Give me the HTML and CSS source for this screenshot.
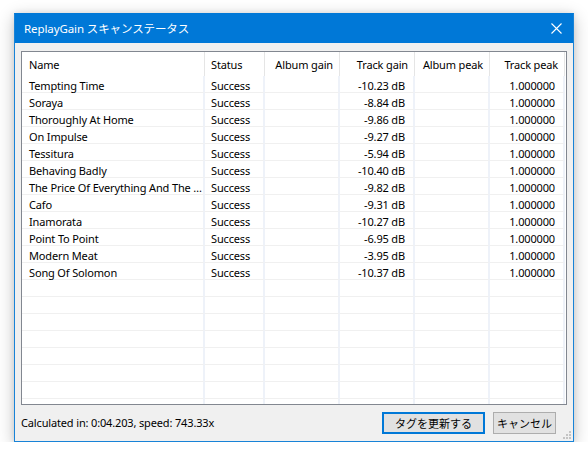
FILE: index.html
```html
<!DOCTYPE html>
<html lang="ja">
<head>
<meta charset="utf-8">
<title>ReplayGain スキャンステータス</title>
<link rel="stylesheet" href="styles.css">
</head>
<body>
<div class="window">
  <div class="titlebar">
    <span class="title">ReplayGain スキャンステータス</span>
    <span class="close">
      <svg width="11" height="11" viewBox="0 0 11 11"><path d="M0.5 0.5 L10.5 10.5 M10.5 0.5 L0.5 10.5" stroke="#fff" stroke-width="1.1" fill="none"/></svg>
    </span>
  </div>
  <div class="content">
    <div class="list">
      <div class="grid">
        <div class="hc">Name</div><div class="hc">Status</div><div class="hc r">Album gain</div><div class="hc r">Track gain</div><div class="hc r">Album peak</div><div class="hc r">Track peak</div>

        <div class="c">Tempting Time</div><div class="c s">Success</div><div class="c"></div><div class="c r">-10.23 dB</div><div class="c"></div><div class="c r">1.000000</div>
        <div class="c">Soraya</div><div class="c s">Success</div><div class="c"></div><div class="c r">-8.84 dB</div><div class="c"></div><div class="c r">1.000000</div>
        <div class="c">Thoroughly At Home</div><div class="c s">Success</div><div class="c"></div><div class="c r">-9.86 dB</div><div class="c"></div><div class="c r">1.000000</div>
        <div class="c">On Impulse</div><div class="c s">Success</div><div class="c"></div><div class="c r">-9.27 dB</div><div class="c"></div><div class="c r">1.000000</div>
        <div class="c">Tessitura</div><div class="c s">Success</div><div class="c"></div><div class="c r">-5.94 dB</div><div class="c"></div><div class="c r">1.000000</div>
        <div class="c">Behaving Badly</div><div class="c s">Success</div><div class="c"></div><div class="c r">-10.40 dB</div><div class="c"></div><div class="c r">1.000000</div>
        <div class="c">The Price Of Everything And The …</div><div class="c s">Success</div><div class="c"></div><div class="c r">-9.82 dB</div><div class="c"></div><div class="c r">1.000000</div>
        <div class="c">Cafo</div><div class="c s">Success</div><div class="c"></div><div class="c r">-9.31 dB</div><div class="c"></div><div class="c r">1.000000</div>
        <div class="c">Inamorata</div><div class="c s">Success</div><div class="c"></div><div class="c r">-10.27 dB</div><div class="c"></div><div class="c r">1.000000</div>
        <div class="c">Point To Point</div><div class="c s">Success</div><div class="c"></div><div class="c r">-6.95 dB</div><div class="c"></div><div class="c r">1.000000</div>
        <div class="c">Modern Meat</div><div class="c s">Success</div><div class="c"></div><div class="c r">-3.95 dB</div><div class="c"></div><div class="c r">1.000000</div>
        <div class="c">Song Of Solomon</div><div class="c s">Success</div><div class="c"></div><div class="c r">-10.37 dB</div><div class="c"></div><div class="c r">1.000000</div>

        <div class="c"></div><div class="c"></div><div class="c"></div><div class="c"></div><div class="c"></div><div class="c"></div>
        <div class="c"></div><div class="c"></div><div class="c"></div><div class="c"></div><div class="c"></div><div class="c"></div>
        <div class="c"></div><div class="c"></div><div class="c"></div><div class="c"></div><div class="c"></div><div class="c"></div>
        <div class="c"></div><div class="c"></div><div class="c"></div><div class="c"></div><div class="c"></div><div class="c"></div>
        <div class="c"></div><div class="c"></div><div class="c"></div><div class="c"></div><div class="c"></div><div class="c"></div>
        <div class="c"></div><div class="c"></div><div class="c"></div><div class="c"></div><div class="c"></div><div class="c"></div>
        <div class="c"></div><div class="c"></div><div class="c"></div><div class="c"></div><div class="c"></div><div class="c"></div>
        <div class="c"></div><div class="c"></div><div class="c"></div><div class="c"></div><div class="c"></div><div class="c"></div>
      </div>
    </div>
    <div class="footer">
      <span class="status">Calculated in: 0:04.203, speed: 743.33x</span>
      <button class="btn default">タグを更新する</button>
      <button class="btn cancel">キャンセル</button>
    </div>
  </div>
  <svg class="grip" width="8" height="8" viewBox="0 0 8 8">
    <rect x="6" y="0" width="2" height="2" fill="#c4c4c4"/>
    <rect x="3" y="3" width="2" height="2" fill="#c4c4c4"/>
    <rect x="6" y="3" width="2" height="2" fill="#c4c4c4"/>
    <rect x="0" y="6" width="2" height="2" fill="#c4c4c4"/>
    <rect x="3" y="6" width="2" height="2" fill="#c4c4c4"/>
    <rect x="6" y="6" width="2" height="2" fill="#c4c4c4"/>
  </svg>
</div>
</body>
</html>
```

FILE: styles.css
```css
html, body {
  margin: 0;
  padding: 0;
  background: #ffffff;
}

body {
  font-family: "Noto Sans", "Noto Sans CJK JP", sans-serif;
  font-size: 11px;
  letter-spacing: -0.15px;
  color: #000;
}

.window {
  position: relative;
  margin: 13px 0 0 14px;
  width: 558px;
  height: 427px;
  border: 1px solid #1883d7;
  border-top-color: #0078d7;
  background: #f0f0f0;
  box-shadow: 0 4px 16px rgba(0, 0, 0, 0.24), 0 0 6px rgba(0, 0, 0, 0.08);
  display: flex;
  flex-direction: column;
}

.titlebar {
  height: 29px;
  background: #0078d7;
  display: flex;
  align-items: center;
  justify-content: space-between;
  padding: 0 10px 0 9px;
  color: #fff;
  flex: none;
}

.title {
  font-size: 11.5px;
  letter-spacing: -0.1px;
  padding-bottom: 1px;
}

.close {
  display: flex;
  align-items: center;
  justify-content: center;
  width: 14px;
  height: 14px;
}

.content {
  flex: 1;
  display: flex;
  flex-direction: column;
  padding: 8px 6px 0 6px;
}

.list {
  height: 352px;
  border: 1px solid #828790;
  background: #fff;
  overflow: hidden;
  flex: none;
}

.grid {
  display: grid;
  grid-template-columns: 183px 60px 75px 75px 75px 75px;
  grid-auto-rows: 17px;
  grid-template-rows: 24px;
}

.hc {
  height: 24px;
  box-sizing: border-box;
  border-right: 1px solid #e5e5e5;
  padding: 0 6px 0 7px;
  display: flex;
  align-items: center;
  white-space: nowrap;
  overflow: hidden;
}

.hc:nth-child(2) {
  padding-left: 6px;
}

.hc.r {
  justify-content: flex-end;
  padding-right: 6px;
}

.c {
  box-sizing: border-box;
  height: 17px;
  border-right: 2px solid #eef2f9;
  border-bottom: 1px solid #f0f0f0;
  padding: 4px 4px 0 7px;
  display: flex;
  align-items: center;
  white-space: nowrap;
  overflow-x: clip;
  overflow-y: visible;
  line-height: 12px;
}

.c.s {
  padding-left: 6px;
}

.c.r {
  justify-content: flex-end;
  padding-right: 8px;
}

.footer {
  flex: 1;
  display: flex;
  align-items: center;
  padding: 0 11px 0 0;
}

.status {
  flex: 1;
  padding-bottom: 1px;
}

.btn {
  font-family: "Noto Sans CJK JP", "Noto Sans", sans-serif;
  font-size: 11px;
  letter-spacing: 0;
  height: 22px;
  box-sizing: border-box;
  background: #e1e1e1;
  color: #000;
  margin: 0;
  padding: 0;
  line-height: 1;
}

.default {
  width: 103px;
  border: 2px solid #0078d7;
  margin-right: 8px;
}

.cancel {
  width: 63px;
  border: 1px solid #adadad;
}

.grip {
  position: absolute;
  right: 2px;
  bottom: 2px;
}
```
